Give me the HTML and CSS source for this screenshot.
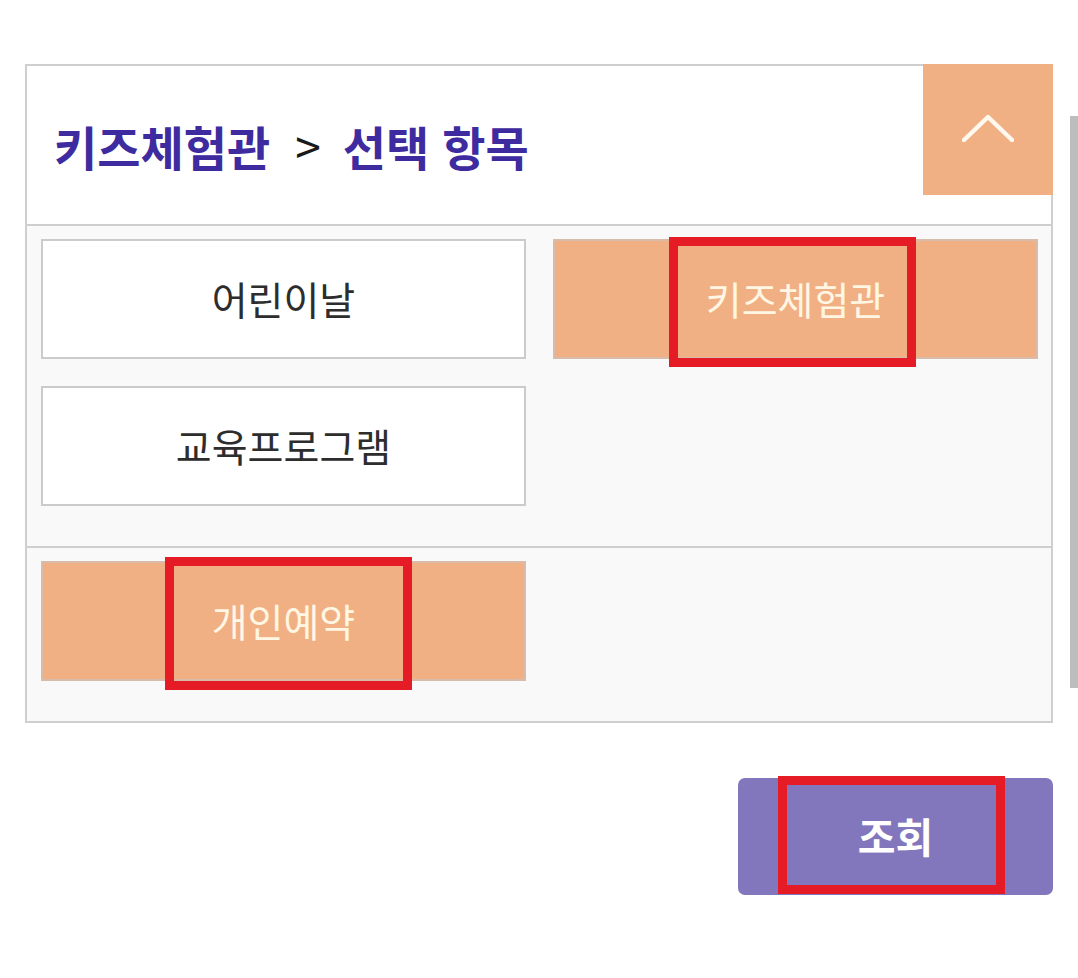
FILE: index.html
```html
<!DOCTYPE html>
<html lang="ko">
<head>
<meta charset="utf-8">
<title>선택 항목</title>
<link rel="stylesheet" href="styles.css">
</head>
<body>
<div class="page">
  <div class="panel">
    <div class="panel-head">
      <h2 class="crumb"><span>키즈체험관</span><span class="sep">&gt;</span><span>선택 항목</span></h2>
      <button class="toggle" aria-label="접기">
        <svg width="52" height="28" viewBox="0 0 52 28"><path d="M2 26 L26 3 L50 26" fill="none" stroke="#fff8ef" stroke-width="4.5" stroke-linecap="round" stroke-linejoin="round"/></svg>
      </button>
    </div>
    <div class="section">
      <div class="opt">어린이날</div>
      <div class="opt on"><span class="mark m1"></span>키즈체험관</div>
      <div class="opt">교육프로그램</div>
    </div>
    <div class="section">
      <div class="opt on"><span class="mark m2"></span>개인예약</div>
    </div>
  </div>
  <div class="actions">
    <button class="search"><span class="mark m3"></span>조회</button>
  </div>
</div>
<div class="scrollbar"></div>
</body>
</html>
```
FILE: styles.css
```css
* { box-sizing: border-box; }
html, body { margin: 0; padding: 0; background: #fff; }
body { font-family: "Noto Sans CJK KR", "Noto Sans", sans-serif; width: 1078px; height: 978px; overflow: hidden; }
.page { padding: 64px 0 0 25px; width: 1053px; }
.panel { position: relative; border: 2px solid #cfcfcf; background: #f9f9f9; }
.panel-head { height: 160px; background: #fff; border-bottom: 2px solid #cfcfcf; display: flex; align-items: center; padding-left: 27px; padding-bottom: 0; }
.crumb { margin: 0; font-size: 47px; font-weight: 700; color: #3e2ba0; letter-spacing: 0; display: flex; align-items: center; }
.crumb .sep { color: #1a1a1a; font-weight: 400; margin: 0 22px 0 25px; font-size: 46px; }
.toggle { position: absolute; top: -2px; right: -2px; width: 130px; height: 131px; border: 0; padding: 0; background: #f1b084; display: flex; align-items: center; justify-content: center; }
.toggle svg { margin-top: -4px; }
.section { display: grid; grid-template-columns: 485px 485px; column-gap: 27px; row-gap: 27px; padding: 13px 13px 40px 14px; }
.section + .section { border-top: 2px solid #cfcfcf; }
.opt { position: relative; height: 120px; border: 2px solid #cbcbcb; background: #fff; display: flex; align-items: center; justify-content: center; font-size: 39px; color: #2d2d2d; padding-bottom: 2px; }
.opt.on { background: #f1b084; border-color: #d8bba8; color: #fff6e3; }
.mark { position: absolute; border: 9px solid #e51c25; pointer-events: none; }
.m1 { left: 114px; top: -4px; width: 247px; height: 130px; }
.m2 { left: 122px; top: -6px; width: 247px; height: 133px; }
.actions { display: flex; justify-content: flex-end; padding-top: 55px; }
.search { position: relative; width: 315px; height: 117px; border: 0; border-radius: 7px; background: #8277bd; color: #fff; font-family: "Noto Sans CJK KR", sans-serif; font-size: 41px; font-weight: 700; padding: 0 0 4px 0; }
.m3 { left: 40px; top: -2px; width: 227px; height: 118px; }
.scrollbar { position: fixed; right: 0; top: 116px; width: 8px; height: 572px; background: #bdbdbd; }
```
